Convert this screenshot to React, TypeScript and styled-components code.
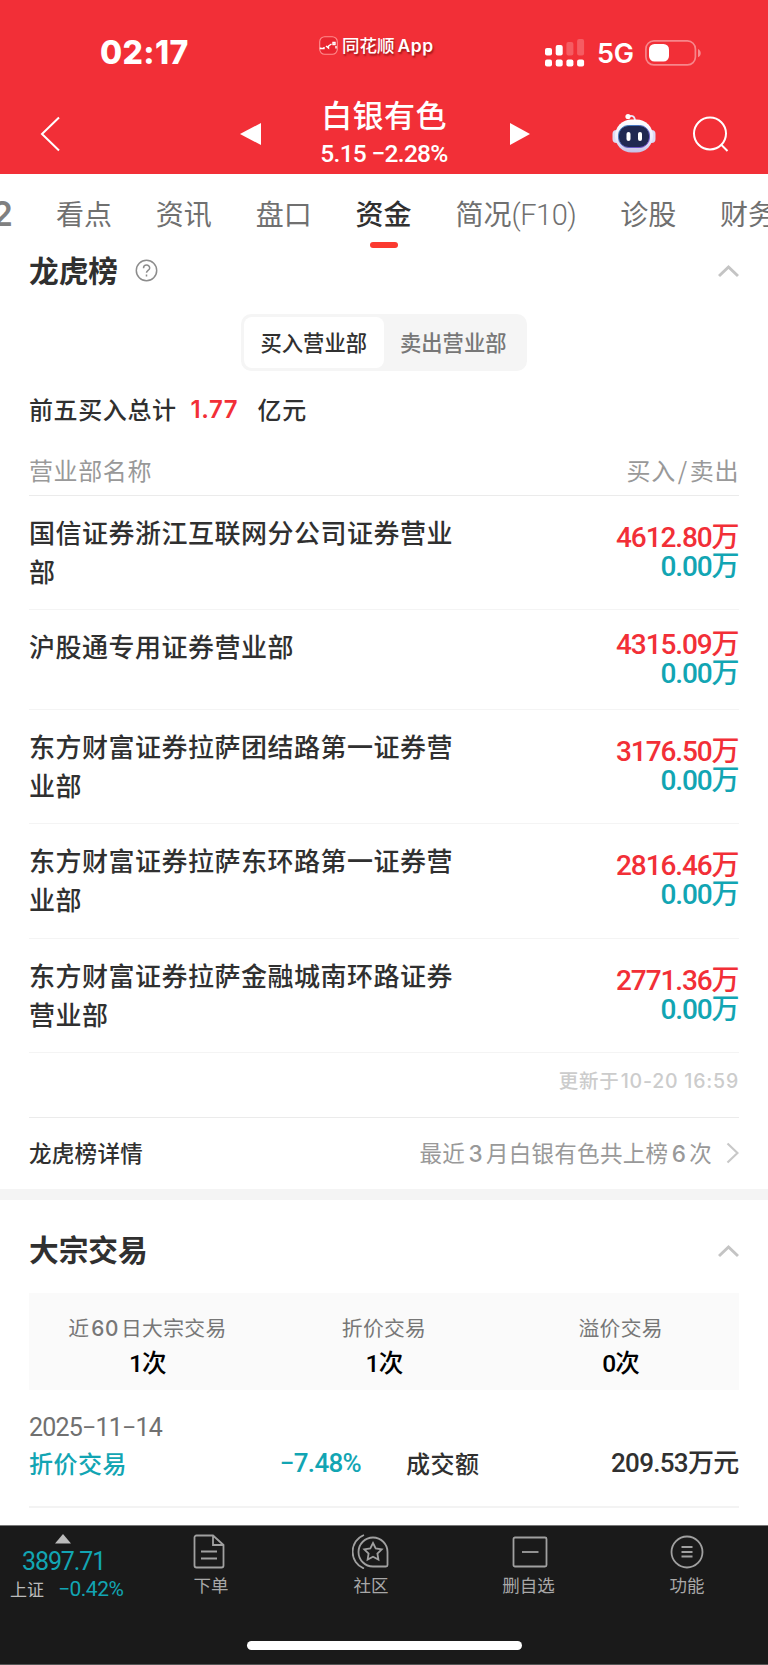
import React from 'react';
import styled, { createGlobalStyle } from 'styled-components';

const RED = '#f22f37';
const TEAL = '#12a5b3';
const INK = '#303030';

const GlobalStyle = createGlobalStyle`
  * { box-sizing: border-box; }
  body { margin: 0; background: #fff; }
`;

const Screen = styled.div`
  width: 768px;
  height: 1665px;
  display: flex;
  flex-direction: column;
  overflow: hidden;
  background: #fff;
  color: ${INK};
  font-family: 'Noto Sans CJK SC', sans-serif;
  font-weight: 400;
  white-space: nowrap;
`;

const Header = styled.header`
  height: 174px;
  flex: none;
  background: ${RED};
  color: #fff;
`;

const StatusBar = styled.div`
  height: 94px;
  padding-top: 28px;
  display: grid;
  grid-template-columns: 319px 226px 1fr;
  align-items: start;
`;

const Clock = styled.div`
  padding-left: 100px;
  font: 800 32px/50px Inter, sans-serif;
  letter-spacing: 0.4px;
`;

const AppTag = styled.div`
  display: flex;
  align-items: center;
  gap: 4px;
  margin-top: 4px;
  height: 26px;
  font-size: 17.5px;
  font-weight: 500;
  line-height: 26px;
  text-shadow: 1px 2px 2px rgba(90, 0, 0, 0.55);
`;

const AppWord = styled.span`
  margin-left: 3px;
  font-family: Inter, sans-serif;
  font-weight: 600;
  letter-spacing: 0.5px;
`;

const StatusIcons = styled.div`
  display: flex;
  align-items: center;
  height: 50px;
`;

const Network = styled.span`
  width: 48px;
  margin-left: 12px;
  font: 600 27px/50px Inter, sans-serif;
  letter-spacing: -0.2px;
  padding-top: 2px;
`;

const TitleBar = styled.div`
  height: 80px;
  display: grid;
  grid-template-columns: 240px 288px 84px 1fr;
  align-items: center;
`;

const BackIcon = styled.svg`
  margin-left: 40px;
`;

const StockSwitch = styled.div`
  display: flex;
  justify-content: space-between;
  align-items: center;
`;

const StockName = styled.div`
  text-align: center;
  padding: 0 4px 2px 0;
  h1 {
    margin: -2px 0 0;
    font-size: 31px;
    font-weight: 500;
    line-height: 40px;
    letter-spacing: 0.4px;
  }
  p {
    margin: 3px 0 0;
    font: 500 24.5px/34px Roboto, sans-serif;
    letter-spacing: -0.7px;
  }
`;

const HeaderActions = styled.div`
  grid-column: 4;
  display: flex;
  align-items: center;
  gap: 36px;
`;

const Tabs = styled.nav`
  height: 75px;
  flex: none;
  display: flex;
  gap: 43.9px;
  overflow: hidden;
  margin-left: -6px;
`;

const Tab = styled.div<{ $active?: boolean }>`
  flex: none;
  display: flex;
  flex-direction: column;
  align-items: center;
  padding-top: 19px;
  font-size: 28px;
  line-height: 41px;
  font-weight: ${(p) => (p.$active ? 500 : 400)};
  color: ${(p) => (p.$active ? INK : '#707070')};
  &::after {
    content: '';
    width: 28px;
    height: 6px;
    margin-top: 8px;
    border-radius: 3px;
    background: ${(p) => (p.$active ? '#fb3a30' : 'transparent')};
  }
`;

const LevelTab = styled.div`
  width: 19px;
  flex: none;
  display: flex;
  justify-content: flex-end;
  margin-right: -1px;
  padding: 19px 0 0;
  color: #808080;
  font: 600 34px/41px Inter, sans-serif;
`;

const Latin = styled.span`
  font-family: Roboto, sans-serif;
  font-size: 29px;
  font-weight: 300;
  letter-spacing: -0.5px;
`;

const Section = styled.section`
  padding: 0 29px;
`;

const SectionHead = styled.div<{ $height: number }>`
  height: ${(p) => p.$height}px;
  display: flex;
  align-items: center;
  h2 {
    margin: -1px 0 0;
    font-size: 29.7px;
    font-weight: 700;
    line-height: 42px;
  }
  svg:last-child { margin: 0 0 0 auto; }
`;

const HelpIcon = styled.svg`
  margin-left: 16.5px;
`;

const Segmented = styled.div`
  width: 286px;
  height: 57px;
  margin: 22px 0 0 212px;
  padding: 3px;
  display: flex;
  border-radius: 10px;
  background: #f5f5f5;
`;

const Segment = styled.div<{ $active?: boolean }>`
  flex: 1;
  border-radius: 8px;
  background: ${(p) => (p.$active ? '#fff' : 'transparent')};
  color: ${(p) => (p.$active ? INK : '#777')};
  font-size: 21.3px;
  font-weight: 500;
  line-height: 50px;
  text-align: center;
  &:last-child { padding-right: 1px; }
`;

const Total = styled.div`
  margin-top: 20px;
  height: 36px;
  display: flex;
  font-size: 24px;
  line-height: 36px;
  letter-spacing: 0.6px;
  font-weight: 500;
  strong {
    width: 67px;
    margin-left: 14px;
    color: ${RED};
    font: 600 24px/38px Inter, sans-serif;
    letter-spacing: 0.5px;
  }
`;

const ColumnHead = styled.div`
  height: 69px;
  padding-top: 26px;
  display: flex;
  justify-content: space-between;
  color: #999;
  font-size: 24px;
  line-height: 34px;
  letter-spacing: 0.6px;
  border-bottom: 1px solid #ebebeb;
  i { margin: 0 2px; font-style: normal; }
`;

const Row = styled.div`
  min-height: 100px;
  padding: 16px 0 19.2px;
  display: flex;
  justify-content: space-between;
  border-bottom: 1px solid #f4f4f4;
`;

const BranchName = styled.div`
  width: 430px;
  white-space: normal;
  font-size: 26px;
  font-weight: 500;
  line-height: 39px;
  letter-spacing: 0.5px;
`;

const Amounts = styled.div`
  align-self: center;
  margin-top: 2px;
  padding-right: 0.5px;
  text-align: right;
`;

const Amount = styled.div<{ $color: string }>`
  color: ${(p) => p.$color};
  font: 500 28px/29px Roboto, 'Noto Sans CJK SC', sans-serif;
  letter-spacing: -1.1px;
`;

const Updated = styled.div`
  height: 65px;
  display: flex;
  align-items: center;
  justify-content: flex-end;
  gap: 1px;
  padding-bottom: 7px;
  border-bottom: 1px solid #ebebeb;
  color: #ccc;
  font: 500 19.5px/30px Inter, 'Noto Sans CJK SC', sans-serif;
  letter-spacing: 0.8px;
`;

const DetailRow = styled.div`
  height: 71px;
  padding-bottom: 3px;
  display: flex;
  align-items: center;
  font-size: 22.5px;
  font-weight: 500;
  letter-spacing: 0.3px;
  svg { margin: 2px 0 0 0; }
`;

const DetailNote = styled.span`
  margin-left: auto;
  margin-right: 14px;
  color: #999;
  font-weight: 400;
`;

const Digit = styled.b`
  margin: 0 3px 0 3.4px;
  font-family: Inter, sans-serif;
  font-weight: 500;
  line-height: 1;
`;

const Divider = styled.div`
  height: 11px;
  flex: none;
  background: #f4f4f4;
`;

const BlockSection = styled(Section)`
  h2 { margin: 6px 0 0; }
  ${SectionHead} svg { margin-top: 9px; }
`;

const Summary = styled.dl`
  height: 97px;
  margin: 0;
  display: grid;
  grid-template-columns: repeat(3, 1fr);
  background: #fafafa;
  text-align: center;
`;

const Stat = styled.div`
  padding-top: 19px;
  dt {
    height: 30px;
    color: #777;
    font-size: 20.8px;
    line-height: 30px;
    letter-spacing: 0.3px;
  }
  dd {
    margin: 4px 0 0;
    color: #000;
    font: 500 24.5px/36px Roboto, 'Noto Sans CJK SC', sans-serif;
    letter-spacing: -0.8px;
  }
  ${Digit} { margin: 0 2px; letter-spacing: 0.6px; }
`;

const Trade = styled.div`
  height: 118px;
  padding-top: 22px;
  border-bottom: 2px solid #f3f3f3;
`;

const TradeDate = styled.div`
  color: #707070;
  font: 400 25px/32px Roboto, sans-serif;
  letter-spacing: -0.8px;
`;

const TradeLine = styled.div`
  display: grid;
  grid-template-columns: 200px 132px 45px 1fr auto;
  padding-right: 0.5px;
`;

const TradeLabel = styled.span<{ $color?: string }>`
  color: ${(p) => p.$color ?? INK};
  font-size: 24px;
  font-weight: 500;
  line-height: 38px;
  letter-spacing: 0.5px;
`;

const TradeValue = styled.span<{ $color?: string }>`
  text-align: right;
  color: ${(p) => p.$color ?? INK};
  font: 500 26px/38px Roboto, 'Noto Sans CJK SC', sans-serif;
  letter-spacing: -0.7px;
`;

const BottomBar = styled.footer`
  height: 140px;
  flex: none;
  margin-top: auto;
  display: flex;
  flex-direction: column;
  justify-content: space-between;
  align-items: center;
  padding-bottom: 14px;
  background: #1a1a1a;
  border-top: 1px solid #777;
  border-bottom: 1px solid #555;
`;

const BottomItems = styled.div`
  width: 100%;
  display: grid;
  grid-template-columns: 131px 160px 160px 155px 162px;
`;

const IndexQuote = styled.div`
  padding: 8px 0 0 10px;
  color: ${TEAL};
  font-family: Roboto, sans-serif;
  svg { display: block; margin-left: 45px; }
`;

const IndexPrice = styled.div`
  margin: 3px 0 0 12px;
  font-size: 25px;
  line-height: 29px;
  letter-spacing: -1.1px;
`;

const IndexChange = styled.div`
  display: flex;
  gap: 14px;
  font-size: 21px;
  line-height: 26px;
  letter-spacing: -0.5px;
  span {
    color: #bbb;
    font: 400 17px/26px 'Noto Sans CJK SC', sans-serif;
    letter-spacing: 0;
  }
`;

const BottomItem = styled.div`
  padding-top: 7px;
  display: flex;
  flex-direction: column;
  align-items: center;
  color: #a8a8a8;
  font-size: 17.5px;
  line-height: 24px;
  svg { display: block; margin-bottom: 4px; }
`;

const HomeIndicator = styled.div`
  width: 275px;
  height: 9px;
  border-radius: 5px;
  background: #fff;
`;

const branches = [
  ['国信证券浙江互联网分公司证券营业部', '4612.80万'],
  ['沪股通专用证券营业部', '4315.09万'],
  ['东方财富证券拉萨团结路第一证券营业部', '3176.50万'],
  ['东方财富证券拉萨东环路第一证券营业部', '2816.46万'],
  ['东方财富证券拉萨金融城南环路证券营业部', '2771.36万'],
];

const Collapse = () => (
  <svg width="21" height="14" viewBox="0 0 21 14" fill="none" stroke="#c4c4c4" strokeWidth="3">
    <path d="M1 12 10.5 3l9.5 9" />
  </svg>
);

const Signal = () => (
  <svg width="40" height="28" viewBox="0 0 40 28" fill="#fff">
    {[0, 1, 2, 3].map((i) => (
      <React.Fragment key={i}>
        <rect x={i * 10.7} y={9 - i * 3} width="7" height={7.5 + i * 3} rx="2" opacity={i < 2 ? 1 : 0.22} />
        <rect x={i * 10.7} y="20.5" width="7" height="7" rx="2" />
      </React.Fragment>
    ))}
  </svg>
);

const Battery = () => (
  <svg width="57" height="26" viewBox="0 0 57 26">
    <rect x="0.9" y="0.9" width="49.5" height="24" rx="8" fill="none" stroke="#fff" strokeOpacity="0.42" strokeWidth="1.7" />
    <rect x="4" y="4" width="20" height="17.5" rx="5.5" fill="#fff" />
    <path d="M53 9c3.6 1.3 3.6 7 0 8.3z" fill="#fff" opacity="0.45" />
  </svg>
);

const Robot = () => (
  <svg width="44" height="42" viewBox="0 0 44 42">
    <defs>
      <linearGradient id="shell" x1="0" y1="0" x2="0" y2="1">
        <stop offset="0" stopColor="#fff" />
        <stop offset="0.6" stopColor="#ecebfb" />
        <stop offset="1" stopColor="#c4c1e6" />
      </linearGradient>
      <linearGradient id="rim" x1="0" y1="0" x2="1" y2="1">
        <stop offset="0" stopColor="#3686bd" />
        <stop offset="1" stopColor="#7a45c8" />
      </linearGradient>
    </defs>
    <path d="M16 3.5c5-1.5 7 0 7 5" fill="none" stroke="#e8e6f8" strokeWidth="1.8" />
    <circle cx="16" cy="3.5" r="2.6" fill="#fff" />
    <rect x="0.5" y="17" width="8" height="13" rx="4" fill="#dcdaf4" />
    <rect x="35.5" y="17" width="8" height="13" rx="4" fill="#dcdaf4" />
    <rect x="3" y="6.5" width="38" height="33" rx="16.5" fill="url(#shell)" />
    <rect x="6.5" y="12.5" width="31" height="22" rx="10" fill="#202851" stroke="url(#rim)" strokeWidth="1" />
    <rect x="14.5" y="19" width="4" height="9" rx="2" fill="#fff" />
    <rect x="26" y="19" width="4" height="9" rx="2" fill="#fff" />
  </svg>
);

export default function App() {
  return (
    <>
      <GlobalStyle />
      <Screen>
        <Header>
          <StatusBar>
            <Clock>02:17</Clock>
            <AppTag>
              <svg width="19" height="19" viewBox="0 0 19 19" fill="none">
                <rect x="0.7" y="0.7" width="17.6" height="17.6" rx="5" fill="#e92530" stroke="#ff8f8f" strokeWidth="1.1" />
                <path d="M1.5 11.5v1H5V11M7 10l2.5 2v-2l3-2" stroke="#fff" strokeWidth="1.4" />
                <path d="M14 6.5h2v2h-2zM17 10v2.5" stroke="#fff" strokeWidth="1.4" />
              </svg>
              <span>同花顺<AppWord>App</AppWord></span>
            </AppTag>
            <StatusIcons>
              <Signal />
              <Network>5G</Network>
              <Battery />
            </StatusIcons>
          </StatusBar>
          <TitleBar>
            <BackIcon width="22" height="36" viewBox="0 0 22 36" fill="none" stroke="#fff" strokeWidth="2">
              <path d="M19 1.5 2 18l17 16.5" />
            </BackIcon>
            <StockSwitch>
              <svg width="22" height="24" viewBox="0 0 22 24" fill="#fff"><path d="M0 12 21 1v22z" /></svg>
              <StockName>
                <h1>白银有色</h1>
                <p>5.15 −2.28%</p>
              </StockName>
              <svg width="18" height="24" viewBox="0 0 18 24" fill="#fff" overflow="visible"><path d="M0 1v22l20-11z" /></svg>
            </StockSwitch>
            <HeaderActions>
              <Robot />
              <svg width="38" height="38" viewBox="0 0 38 38" fill="none" stroke="#fff" strokeWidth="2">
                <circle cx="18" cy="18.5" r="16" />
                <path d="m29 29.5 6.5 6.5" />
              </svg>
            </HeaderActions>
          </TitleBar>
        </Header>

        <Tabs>
          <LevelTab>2</LevelTab>
          <Tab>看点</Tab>
          <Tab>资讯</Tab>
          <Tab>盘口</Tab>
          <Tab $active>资金</Tab>
          <Tab><span>简况<Latin>(F10)</Latin></span></Tab>
          <Tab>诊股</Tab>
          <Tab>财务</Tab>
        </Tabs>

        <Section>
          <SectionHead $height={43}>
            <h2>龙虎榜</h2>
            <HelpIcon width="23" height="23" viewBox="0 0 23 23" fill="none" stroke="#8c8c8c" strokeWidth="1.5">
              <circle cx="11.5" cy="11.5" r="10.2" />
              <path d="M8.5 9.3c0-4.3 6.2-4.1 6.2-.3 0 2.4-3.2 2.5-3.2 4.8M11.5 15.5v2" />
            </HelpIcon>
            <Collapse />
          </SectionHead>
          <Segmented>
            <Segment $active>买入营业部</Segment>
            <Segment>卖出营业部</Segment>
          </Segmented>
          <Total>
            前五买入总计<strong>1.77</strong>亿元
          </Total>
          <ColumnHead>
            <span>营业部名称</span>
            <span>买入<i>/</i>卖出</span>
          </ColumnHead>
          {branches.map(([name, buy]) => (
            <Row key={name}>
              <BranchName>{name}</BranchName>
              <Amounts>
                <Amount $color={RED}>{buy}</Amount>
                <Amount $color={TEAL}>0.00万</Amount>
              </Amounts>
            </Row>
          ))}
          <Updated><span>更新于</span><span>10-20 16:59</span></Updated>
          <DetailRow>
            龙虎榜详情
            <DetailNote>最近<Digit>3</Digit>月白银有色共上榜<Digit>6</Digit>次</DetailNote>
            <svg width="13" height="22" viewBox="0 0 13 22" fill="none" stroke="#c8c8c8" strokeWidth="2.2">
              <path d="m1.5 1.5 10 9.5-10 9.5" />
            </svg>
          </DetailRow>
        </Section>

        <Divider />

        <BlockSection>
          <SectionHead $height={93}>
            <h2>大宗交易</h2>
            <Collapse />
          </SectionHead>
          <Summary>
            <Stat>
              <dt>近<Digit>60</Digit>日大宗交易</dt>
              <dd>1次</dd>
            </Stat>
            <Stat>
              <dt>折价交易</dt>
              <dd>1次</dd>
            </Stat>
            <Stat>
              <dt>溢价交易</dt>
              <dd>0次</dd>
            </Stat>
          </Summary>
          <Trade>
            <TradeDate>2025−11−14</TradeDate>
            <TradeLine>
              <TradeLabel $color={TEAL}>折价交易</TradeLabel>
              <TradeValue $color={TEAL}>−7.48%</TradeValue>
              <i />
              <TradeLabel>成交额</TradeLabel>
              <TradeValue>209.53万元</TradeValue>
            </TradeLine>
          </Trade>
        </BlockSection>

        <BottomBar>
          <BottomItems>
            <IndexQuote>
              <svg width="16" height="10" viewBox="0 0 16 10" fill="#bbb"><path d="M0 9.5 8 0l8 9.5z" /></svg>
              <IndexPrice>3897.71</IndexPrice>
              <IndexChange><span>上证</span>−0.42%</IndexChange>
            </IndexQuote>
            <BottomItem>
              <svg width="38" height="36" viewBox="0 0 38 36" fill="none" stroke="#a0a0a0" strokeWidth="1.8">
                <path d="M21 2.5H4.5a2 2 0 0 0-2 2v28a2 2 0 0 0 2 2h25a2 2 0 0 0 2-2V12zM21 2.5V12h10.5M9 18.5h16M9 25.5h16" />
              </svg>
              下单
            </BottomItem>
            <BottomItem>
              <svg width="38" height="36" viewBox="0 0 38 36" fill="none" stroke="#a0a0a0" strokeWidth="1.8">
                <path d="M21 33.5a14.5 14.5 0 1 1 14.5-14.5v13a1.5 1.5 0 0 1-1.5 1.5z" />
                <path d="M12 2a18 18 0 0 0 0 33.5" />
                <path d="m21 10 2.7 5.4 6 .9-4.3 4.2 1 6-5.4-2.8-5.4 2.800 1-6-4.3-4.2 6-.9z" />
              </svg>
              社区
            </BottomItem>
            <BottomItem>
              <svg width="34" height="36" viewBox="0 0 34 36" fill="none" stroke="#a0a0a0" strokeWidth="1.8" overflow="visible">
                <rect x="1.5" y="4.5" width="33" height="29" rx="1.5" />
                <path d="M10 19h16.5" />
              </svg>
              删自选
            </BottomItem>
            <BottomItem>
              <svg width="36" height="36" viewBox="0 0 36 36" fill="none" stroke="#a0a0a0" strokeWidth="1.8">
                <circle cx="18" cy="19" r="15.5" />
                <path d="M12.5 14h11M12.5 19h11M12.5 23.5h11" />
              </svg>
              功能
            </BottomItem>
          </BottomItems>
          <HomeIndicator />
        </BottomBar>
      </Screen>
    </>
  );
}
